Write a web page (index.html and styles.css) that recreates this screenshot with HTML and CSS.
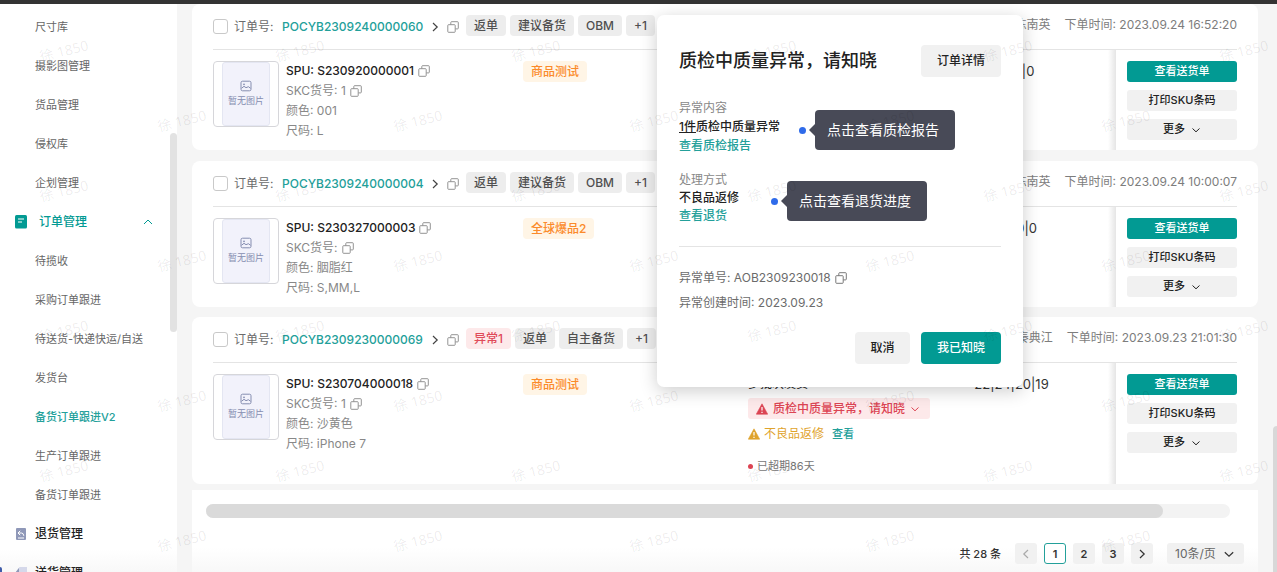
FILE: index.html
```html
<!DOCTYPE html>
<html lang="zh-CN">
<head>
<meta charset="utf-8">
<title>备货订单跟进V2</title>
<link rel="stylesheet" href="styles.css">
</head>
<body>
<svg class="sprite" aria-hidden="true">
  <symbol id="i-copy" viewBox="0 0 12 12"><path d="M3.800 3.600V1.500a.8.8 0 0 1 .8-.8h5.900a.8.8 0 0 1 .8.8v5.600a.8.8 0 0 1-.8.8H8.400M1.500 3.700h6a.7.7 0 0 1 .7.7v6.200a.7.7 0 0 1-.7.7h-6a.7.7 0 0 1-.7-.7V4.400a.7.7 0 0 1 .7-.7z" fill="none" stroke="currentColor" stroke-width=".9"/></symbol>
  <symbol id="i-right" viewBox="0 0 10 10"><path d="M3 1l4.200 4L3 9" fill="none" stroke="currentColor" stroke-width="1.200"/></symbol>
  <symbol id="i-left" viewBox="0 0 10 10"><path d="M7 1L2.800 5 7 9" fill="none" stroke="currentColor" stroke-width="1.200"/></symbol>
  <symbol id="i-down" viewBox="0 0 10 10"><path d="M1.500 3.500L5 6.800l3.500-3.300" fill="none" stroke="currentColor"/></symbol>
  <symbol id="i-up" viewBox="0 0 10 10"><path d="M1 7l4-4 4 4" fill="none" stroke="currentColor"/></symbol>
  <symbol id="i-image" viewBox="0 0 12 12"><rect x="1" y="1.200" width="10" height="9.600" rx="1.500" fill="none" stroke="currentColor"/><circle cx="4" cy="4.300" r=".9" fill="currentColor"/><path d="M1.500 8.300l2.500-2 2 1.400 2.400-1 2.200 1.600" fill="none" stroke="currentColor"/></symbol>
  <symbol id="i-warn" viewBox="0 0 12 12"><path d="M6 .8l5.700 10.400H.3z" fill="currentColor" stroke="currentColor" stroke-width=".6" stroke-linejoin="round"/><path d="M6 4v3.600M6 8.700v1.200" stroke="#fff" stroke-width="1.200"/></symbol>
</svg>

<div class="topbar"></div>
<div class="app">
  <nav class="sidebar">
    <a class="item" href="#">尺寸库</a>
    <a class="item" href="#">摄影图管理</a>
    <a class="item" href="#">货品管理</a>
    <a class="item" href="#">侵权库</a>
    <a class="item" href="#">企划管理</a>
    <button class="group open" type="button">
      <svg class="gi" viewBox="0 0 12 14"><rect width="12" height="13.500" rx="1.500" fill="#029a93"/><path d="M3 4h6M3 7h4" stroke="#fff" stroke-width="1.200"/></svg>
      <span>订单管理</span>
      <svg class="ic10"><use href="#i-up"/></svg>
    </button>
    <a class="item" href="#">待揽收</a>
    <a class="item" href="#">采购订单跟进</a>
    <a class="item" href="#">待送货-快递快运/自送</a>
    <a class="item" href="#">发货台</a>
    <a class="item active" href="#">备货订单跟进V2</a>
    <a class="item" href="#">生产订单跟进</a>
    <a class="item" href="#">备货订单跟进</a>
    <button class="group" type="button">
      <svg class="gi" viewBox="0 0 12 14"><rect x="1" y="1" width="10" height="12" rx="1" fill="#8f98b8"/><path d="M5.200 3.800L3 6l2.200 2.200M3.200 6h3.300q2 0 2.300 2.800M3 11h6" fill="none" stroke="#fff" stroke-width="1"/></svg>
      <span>退货管理</span>
    </button>
    <button class="group" type="button">
      <svg class="gi" viewBox="0 0 12 14"><path d="M4.500 1H12v12H0V7z" fill="#d5d8ea"/><path d="M0 7l4-5v5z" fill="#8f98b8"/></svg>
      <span>送货管理</span>
    </button>
    <div class="side-thumb"></div>
  </nav>

  <main class="main">
    <article class="card">
      <header class="head">
        <input class="check" type="checkbox" id="o1"><label for="o1">订单号:</label>
        <a class="order" href="#">POCYB2309240000060</a>
        <svg class="ic10 dark"><use href="#i-right"/></svg>
        <svg class="ic12"><use href="#i-copy"/></svg>
        <div class="tags"><span class="tag">返单</span><span class="tag">建议备货</span><span class="tag">OBM</span><span class="tag">+1</span></div>
        <div class="meta"><span>陈南英</span><span>下单时间: 2023.09.24 16:52:20</span></div>
      </header>
      <div class="row">
        <div class="thumb"><div class="noimg"><svg class="ic12"><use href="#i-image"/></svg>暂无图片</div></div>
        <div class="info">
          <div class="spu">SPU: S230920000001 <svg class="ic12"><use href="#i-copy"/></svg></div>
          <div>SKC货号: 1 <svg class="ic12"><use href="#i-copy"/></svg></div>
          <div>颜色: 001</div>
          <div>尺码: L</div>
        </div>
        <div class="labels"><span class="tag hot">商品测试</span></div>
        <div class="status"></div>
        <div class="qty">0|0|0|0</div>
        <div class="actions">
          <button class="btn primary" type="button">查看送货单</button>
          <button class="btn" type="button">打印SKU条码</button>
          <button class="btn" type="button">更多 <svg class="ic10"><use href="#i-down"/></svg></button>
        </div>
      </div>
    </article>

    <article class="card">
      <header class="head">
        <input class="check" type="checkbox" id="o2"><label for="o2">订单号:</label>
        <a class="order" href="#">POCYB2309240000004</a>
        <svg class="ic10 dark"><use href="#i-right"/></svg>
        <svg class="ic12"><use href="#i-copy"/></svg>
        <div class="tags"><span class="tag">返单</span><span class="tag">建议备货</span><span class="tag">OBM</span><span class="tag">+1</span></div>
        <div class="meta"><span>陈南英</span><span>下单时间: 2023.09.24 10:00:07</span></div>
      </header>
      <div class="row">
        <div class="thumb"><div class="noimg"><svg class="ic12"><use href="#i-image"/></svg>暂无图片</div></div>
        <div class="info">
          <div class="spu">SPU: S230327000003 <svg class="ic12"><use href="#i-copy"/></svg></div>
          <div>SKC货号: <svg class="ic12"><use href="#i-copy"/></svg></div>
          <div>颜色: 胭脂红</div>
          <div>尺码: S,MM,L</div>
        </div>
        <div class="labels"><span class="tag hot">全球爆品2</span></div>
        <div class="status"></div>
        <div class="qty">10|0|0|0</div>
        <div class="actions">
          <button class="btn primary" type="button">查看送货单</button>
          <button class="btn" type="button">打印SKU条码</button>
          <button class="btn" type="button">更多 <svg class="ic10"><use href="#i-down"/></svg></button>
        </div>
      </div>
    </article>

    <article class="card">
      <header class="head">
        <input class="check" type="checkbox" id="o3"><label for="o3">订单号:</label>
        <a class="order" href="#">POCYB2309230000069</a>
        <svg class="ic10 dark"><use href="#i-right"/></svg>
        <svg class="ic12"><use href="#i-copy"/></svg>
        <div class="tags"><span class="tag bad">异常1</span><span class="tag">返单</span><span class="tag">自主备货</span><span class="tag">+1</span></div>
        <div class="meta"><span>秦典江</span><span>下单时间: 2023.09.23 21:01:30</span></div>
      </header>
      <div class="row">
        <div class="thumb"><div class="noimg"><svg class="ic12"><use href="#i-image"/></svg>暂无图片</div></div>
        <div class="info">
          <div class="spu">SPU: S230704000018 <svg class="ic12"><use href="#i-copy"/></svg></div>
          <div>SKC货号: 1 <svg class="ic12"><use href="#i-copy"/></svg></div>
          <div>颜色: 沙黄色</div>
          <div>尺码: iPhone 7</div>
        </div>
        <div class="labels"><span class="tag hot">商品测试</span></div>
        <div class="status">
          <div class="ship">多批次发货</div>
          <button class="alert" type="button"><svg class="ic12"><use href="#i-warn"/></svg>质检中质量异常，请知晓<svg class="ic10"><use href="#i-down"/></svg></button>
          <div class="repair"><svg class="ic12"><use href="#i-warn"/></svg>不良品返修<a href="#">查看</a></div>
          <div class="late">已超期86天</div>
        </div>
        <div class="qty">22|24|20|19</div>
        <div class="actions">
          <button class="btn primary" type="button">查看送货单</button>
          <button class="btn" type="button">打印SKU条码</button>
          <button class="btn" type="button">更多 <svg class="ic10"><use href="#i-down"/></svg></button>
        </div>
      </div>
    </article>

    <footer class="foot">
      <div class="track"><div class="bar"></div></div>
      <div class="pager">
        <span class="total">共 28 条</span>
        <button class="pg prev" type="button" aria-label="上一页"><svg class="ic10"><use href="#i-left"/></svg></button>
        <button class="pg on" type="button">1</button>
        <button class="pg" type="button">2</button>
        <button class="pg" type="button">3</button>
        <button class="pg next" type="button" aria-label="下一页"><svg class="ic10"><use href="#i-right"/></svg></button>
        <div class="size"><select aria-label="每页条数"><option>10条/页</option></select><svg class="ic12"><use href="#i-down"/></svg></div>
      </div>
    </footer>
    <div class="page-thumb"></div>
  </main>
</div>

<section class="dialog" role="dialog" aria-labelledby="dt">
  <header class="dhead"><h2 id="dt">质检中质量异常，请知晓</h2><button class="dbtn wide" type="button">订单详情</button></header>
  <div class="block first">
    <div class="cap">异常内容</div>
    <div class="val"><u>1件</u>质检中质量异常</div>
    <a href="#">查看质检报告</a>
    <div class="tip">点击查看质检报告</div>
  </div>
  <div class="block second">
    <div class="cap">处理方式</div>
    <div class="val">不良品返修</div>
    <a href="#">查看退货</a>
    <div class="tip">点击查看退货进度</div>
  </div>
  <div class="facts">
    <div>异常单号: AOB2309230018 <svg class="ic12"><use href="#i-copy"/></svg></div>
    <div>异常创建时间: 2023.09.23</div>
  </div>
  <div class="dfoot"><button class="dbtn" type="button">取消</button><button class="dbtn wide ok" type="button">我已知晓</button></div>
</section>

<div class="marks" aria-hidden="true">
  <div><span>徐 1850</span><span>徐 1850</span><span>徐 1850</span><span>徐 1850</span><span>徐 1850</span><span>徐 1850</span></div>
  <div><span>徐 1850</span><span>徐 1850</span><span>徐 1850</span><span>徐 1850</span><span>徐 1850</span></div>
  <div><span>徐 1850</span><span>徐 1850</span><span>徐 1850</span><span>徐 1850</span><span>徐 1850</span><span>徐 1850</span></div>
  <div><span>徐 1850</span><span>徐 1850</span><span>徐 1850</span><span>徐 1850</span><span>徐 1850</span></div>
  <div><span>徐 1850</span><span>徐 1850</span><span>徐 1850</span><span>徐 1850</span><span>徐 1850</span><span>徐 1850</span></div>
  <div><span>徐 1850</span><span>徐 1850</span><span>徐 1850</span><span>徐 1850</span><span>徐 1850</span></div>
  <div><span>徐 1850</span><span>徐 1850</span><span>徐 1850</span><span>徐 1850</span><span>徐 1850</span><span>徐 1850</span></div>
  <div><span>徐 1850</span><span>徐 1850</span><span>徐 1850</span><span>徐 1850</span><span>徐 1850</span></div>
</div>
</body>
</html>
```
FILE: styles.css
```css
* { box-sizing: border-box; }
body {
  margin: 0;
  height: 100vh;
  overflow: hidden;
  position: relative;
  display: flex;
  flex-direction: column;
  background: #f5f5f5;
  color: #6b6b6b;
  font: 12px/20px Inter, "Noto Sans CJK SC", sans-serif;
}
button, input, select { font: inherit; color: inherit; margin: 0; }
button { border: 0; padding: 0; background: none; }
a { color: #23a09a; text-decoration: none; }
svg { flex: none; }
.sprite { position: absolute; width: 0; height: 0; }
.ic10 { width: 10px; height: 10px; }
.ic12 { width: 12px; height: 12px; }
.dark { color: #444; }

.topbar { height: 4px; flex: none; background: #333; }
.app { flex: 1; min-height: 0; display: flex; }

.sidebar {
  position: relative;
  width: 177px;
  flex: none;
  padding-top: 3px;
  overflow: hidden;
  background: linear-gradient(#fff 96%, #f8f8f8);
}
.sidebar::after {
  content: "";
  position: absolute;
  left: 0;
  bottom: 0;
  width: 2px;
  height: 5px;
  border-radius: 0 2px 0 0;
  background: #3f5ba8;
}
.item, .group { display: flex; align-items: center; width: 100%; height: 39px; }
.item { padding-left: 35px; font-size: 11px; color: #666; }
.item.active { color: #23a09a; font-weight: 500; }
.group { gap: 8px; padding: 0 24px 0 15px; color: #222; font-weight: 500; text-align: left; }
.group.open { gap: 12px; color: #029a93; }
.group span { flex: 1; }
.gi { width: 12px; height: 14px; }
.side-thumb {
  position: absolute;
  right: 0;
  top: 129px;
  width: 7px;
  height: 199px;
  border-radius: 4px;
  background: #e2e2e2;
}

.main {
  position: relative;
  flex: 1;
  min-width: 0;
  padding: 0 19px 0 15px;
  display: flex;
  flex-direction: column;
}
.card { flex: none; margin-bottom: 10px; border-radius: 8px; background: #fff; overflow: hidden; }
.card:first-child { margin-bottom: 11px; }
.card:nth-of-type(3) { margin-bottom: 6px; }
.card:nth-of-type(3) .row { min-height: 121px; }
.head {
  display: flex;
  align-items: center;
  height: 46px;
  margin: 0 21px;
  border-bottom: 1px solid #e4e4e4;
}
.check {
  appearance: none;
  width: 15px;
  height: 15px;
  margin-right: 6px;
  border: 1px solid #c9c9c9;
  border-radius: 3px;
  background: #fff;
}
.head label { width: 48px; }
.order { width: 148px; font-weight: 500; }
.head .ic12 { margin: 0 7px; color: #888; }
.tags { display: flex; gap: 4px; padding-bottom: 3px; }
.tag {
  display: inline-block;
  height: 21px;
  padding: 0 8px;
  border-radius: 4px;
  background: #ededed;
  color: #505050;
  line-height: 21px;
  font-weight: 500;
}
.tag.bad { background: #fde9ea; color: #e04a59; }
.tag.hot { background: #fff5e6; color: #fb8a2a; }
.meta { display: flex; gap: 14px; margin-left: auto; padding-bottom: 4px; color: #7d7d7d; }

.row { display: flex; min-height: 100px; padding: 0 21px; }
.thumb {
  display: flex;
  justify-content: center;
  width: 66px;
  height: 66px;
  margin-top: 11px;
  border: 1px solid #d6d6da;
  border-radius: 4px;
}
.noimg {
  display: flex;
  flex-direction: column;
  align-items: center;
  justify-content: center;
  width: 48px;
  background: #f2f2fb;
  border: 1px solid #e4e6f2;
  border-radius: 3px;
  color: #858db0;
  font-size: 9px;
  line-height: 17px;
}
.info { width: 244px; padding: 11px 0 0 7px; color: #888; }
.info div { display: flex; align-items: center; gap: 4px; height: 20px; line-height: 20px; }
.info .spu { color: #222; font-weight: 500; }
.info svg { color: #888; }
.labels { width: 225px; padding-top: 11px; }
.status { width: 188px; padding-top: 11px; }
.qty { flex: 1; padding: 11px 29px 0 0; text-align: center; font-size: 13px; color: #333; }
.actions {
  position: relative;
  display: flex;
  flex-direction: column;
  gap: 8px;
  width: 121px;
  padding: 11px 0 0 11px;
}
.actions::before {
  content: "";
  position: absolute;
  inset: 0 auto 0 -8px;
  width: 8px;
  background: linear-gradient(to right, rgba(0, 0, 0, 0), rgba(0, 0, 0, .1));
}
.btn {
  display: flex;
  align-items: center;
  justify-content: center;
  gap: 6px;
  height: 21px;
  border-radius: 3px;
  background: #f1f1f1;
  color: #222;
  font-size: 11px;
  line-height: 21px;
  font-weight: 500;
}
.btn.primary { background: #029a93; color: #fff; }

.ship { color: #222; height: 24px; }
.alert {
  display: flex;
  align-items: center;
  gap: 5px;
  height: 21px;
  padding: 0 10px 0 8px;
  border-radius: 3px;
  background: #fde9ea;
  color: #dc4453;
  font-weight: 500;
  white-space: nowrap;
}
.repair { display: flex; align-items: center; gap: 4px; margin-top: 5px; color: #dfa32c; }
.repair a { margin-left: 4px; font-size: 11px; font-weight: 500; }
.late { display: flex; align-items: center; gap: 4px; margin-top: 12px; font-size: 11px; color: #777; }
.late::before { content: ""; width: 5px; height: 5px; border-radius: 50%; background: #dc4453; }

.foot {
  flex: 1;
  padding: 14px 14px 0;
  background: linear-gradient(#fff 70%, #f8f8f8);
}
.track { height: 14px; margin-right: 14px; border-radius: 7px; background: #f3f3f3; }
.bar { width: 93.5%; height: 14px; border-radius: 7px; background: #dadada; }
.pager { display: flex; align-items: center; justify-content: flex-end; gap: 7px; padding-top: 25px; color: #333; }
.total { margin-right: 7px; font-size: 11px; font-weight: 500; }
.pg {
  display: flex;
  align-items: center;
  justify-content: center;
  width: 22px;
  height: 21px;
  border-radius: 3px;
  background: #f1f1f1;
  font-size: 11px;
  font-weight: 600;
}
.pg.prev { color: #aaa; }
.pg.on { border: 1px solid #23a09a; background: #fff; }
.size { position: relative; width: 77px; margin-left: 7px; }
.size select {
  display: block;
  width: 100%;
  height: 21px;
  padding: 0 8px;
  border: 0;
  border-radius: 3px;
  appearance: none;
  background: #f1f1f1;
  color: #666;
}
.size svg { position: absolute; right: 9px; top: 5px; }
.page-thumb {
  position: absolute;
  right: 0;
  bottom: 0;
  width: 4px;
  height: 146px;
  border-radius: 4px 0 0 0;
  background: #d8d8d8;
}

.dialog {
  position: absolute;
  left: 657px;
  top: 15px;
  width: 366px;
  padding: 30px 22px 23px;
  border-radius: 7px;
  background: #fff;
  box-shadow: 0 4px 18px rgba(0, 0, 0, .2);
}
.dhead { display: flex; align-items: center; justify-content: space-between; }
.dhead h2 { margin: 0; font-size: 18px; line-height: 32px; font-weight: 500; color: #222; }
.dbtn {
  width: 55px;
  height: 32px;
  border-radius: 4px;
  background: #f1f1f1;
  color: #222;
  font-weight: 500;
}
.dbtn.wide { width: 80px; }
.dbtn.ok { background: #029a93; color: #fff; }
.block { position: relative; line-height: 19px; }
.block a { display: block; width: max-content; font-weight: 500; }
.first { margin-top: 21px; }
.second { margin-top: 16px; line-height: 18px; }
.cap { color: #888; }
.val { color: #222; font-weight: 500; }
.tip {
  position: absolute;
  left: 136px;
  top: 12px;
  padding: 0 16px 0 12px;
  border-radius: 4px;
  background: #484a57;
  color: #fff;
  font-size: 14px;
  line-height: 40px;
}
.second .tip { left: 108px; top: 10px; }
.tip::before {
  content: "";
  position: absolute;
  left: -6px;
  top: 14px;
  border: solid transparent;
  border-width: 6px 6px 6px 0;
  border-right-color: #484a57;
}
.tip::after {
  content: "";
  position: absolute;
  left: -16px;
  top: 17px;
  width: 7px;
  height: 7px;
  border-radius: 50%;
  background: #2f6bea;
}
.facts { margin-top: 21px; padding-top: 18px; border-top: 1px solid #e4e4e4; line-height: 25px; }
.facts div { display: flex; align-items: center; gap: 4px; }
.dfoot { display: flex; justify-content: flex-end; gap: 11px; margin-top: 17px; }

.marks {
  position: absolute;
  inset: 0;
  padding-top: 16px;
  overflow: hidden;
  pointer-events: none;
  color: rgba(0, 0, 0, .08);
  font: 14px/70px "Noto Sans", "Noto Sans CJK SC", sans-serif;
}
.marks div { display: flex; height: 70px; margin-left: -54px; }
.marks div:nth-child(even) { margin-left: 64px; }
.marks span { flex: none; width: 236px; text-align: center; transform: rotate(-14deg); }
```
